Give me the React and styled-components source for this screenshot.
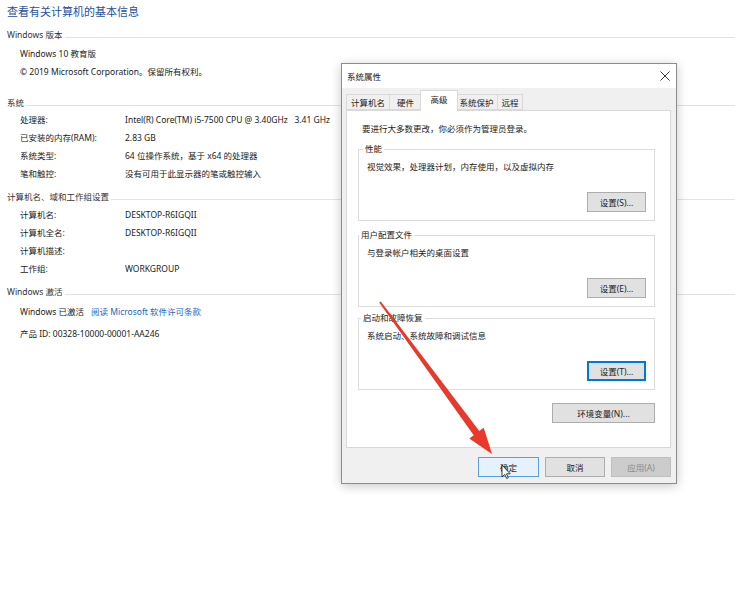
import React from 'react';
import styled, { createGlobalStyle } from 'styled-components';

const GlobalStyle = createGlobalStyle`
  html, body {
    margin: 0;
    padding: 0;
    background: #fff;
  }
  body {
    font-family: "Noto Sans", "Noto Sans CJK SC", sans-serif;
    font-size: 8.5px;
    color: #222;
  }
`;

const Page = styled.div`
  position: relative;
  width: 735px;
  height: 599px;
  overflow: hidden;
  background: #fff;
`;

const Info = styled.div`
  padding: 4px 0 0 7px;
`;

const Title = styled.h1`
  margin: 0;
  font-size: 11px;
  line-height: 16px;
  font-weight: normal;
  color: #1f4f9e;
`;

const Section = styled.section`
  margin-top: ${({ $top }) => $top}px;
`;

const SectionHead = styled.div`
  display: flex;
  align-items: center;
  height: 16px;
  line-height: 16px;
  color: #333;
  white-space: nowrap;

  &::after {
    content: '';
    flex: 1;
    height: 1px;
    margin: 5px 0 0 2px;
    background: #e3e3e3;
  }
`;

const Rows = styled.div`
  margin-top: ${({ $top }) => $top || 0}px;
`;

const Row = styled.div`
  display: flex;
  align-items: center;
  height: 18px;
  padding-left: 13px;
  margin-top: ${({ $top }) => $top || 0}px;
  white-space: nowrap;
`;

const Label = styled.span`
  width: 105px;
  flex-shrink: 0;
`;

const Link = styled.span`
  margin-left: 7px;
  color: #1a66c2;
`;

/* dialog window */

const Dialog = styled.div`
  position: absolute;
  left: 341px;
  top: 63px;
  width: 336px;
  height: 421px;
  box-sizing: border-box;
  border: 1px solid #8c8c8c;
  background: #f0f0f0;
  box-shadow: 0 2px 10px rgba(0, 0, 0, 0.22);
  display: flex;
  flex-direction: column;
`;

const TitleBar = styled.div`
  height: 24px;
  flex-shrink: 0;
  background: #fff;
  display: flex;
  align-items: center;
  justify-content: space-between;
  padding: 0 6px 0 5px;
`;

const Close = styled.svg`
  width: 10px;
  height: 10px;
`;

const DialogBody = styled.div`
  flex: 1;
  display: flex;
  flex-direction: column;
  padding: 0 5px 0 4px;
`;

const Tabs = styled.div`
  position: relative;
  z-index: 1;
  height: 22px;
  display: flex;
  align-items: flex-end;
`;

const Tab = styled.div`
  position: relative;
  box-sizing: border-box;
  flex-shrink: 0;
  width: ${({ $w }) => $w}px;
  height: ${({ $active }) => ($active ? 21 : 16)}px;
  margin: ${({ $active }) => ($active ? '0 -2px -1px -2px' : '0 0 0 -1px')};
  border: 1px solid #d9d9d9;
  border-bottom: ${({ $active }) => ($active ? 'none' : '1px solid #d9d9d9')};
  background: ${({ $active }) => ($active ? '#fff' : '#f0f0f0')};
  z-index: ${({ $active }) => ($active ? 2 : 1)};
  display: flex;
  align-items: center;
  justify-content: center;
  padding-bottom: ${({ $active }) => ($active ? 4 : 0)}px;
  white-space: nowrap;

  &:first-child {
    margin-left: 0;
  }
`;

const Panel = styled.div`
  box-sizing: border-box;
  height: 338px;
  background: #fff;
  border: 1px solid #d9d9d9;
  padding: 11px 15px 0 11px;
`;

const Intro = styled.div`
  line-height: 14px;
  padding-left: 4px;
`;

const Group = styled.fieldset`
  margin: ${({ $top }) => $top}px 0 0;
  min-width: 0;
  border: 1px solid #dcdcdc;
  padding: 0 8px 8px;

  legend {
    margin-left: ${({ $lx }) => $lx}px;
    padding: 0 2px;
    line-height: 12px;
    font-size: 8.5px;
  }
`;

const Desc = styled.div`
  margin-top: 5px;
  line-height: 14px;
`;

const ButtonRow = styled.div`
  display: flex;
  justify-content: flex-end;
  margin-top: ${({ $top }) => $top}px;
`;

const Button = styled.button`
  box-sizing: border-box;
  width: ${({ $w }) => $w}px;
  height: 20px;
  padding: 0;
  font: inherit;
  color: ${({ $disabled }) => ($disabled ? '#8a8a8a' : '#222')};
  background: ${({ $hover, $disabled }) => ($hover ? '#e5f1fb' : $disabled ? '#cccccc' : '#e1e1e1')};
  border: 1px solid
    ${({ $hover, $focus, $disabled }) =>
      $focus ? '#0078d7' : $hover ? '#5a9fdf' : $disabled ? '#bfbfbf' : '#adadad'};
  box-shadow: ${({ $focus }) => ($focus ? 'inset 0 0 0 1px #0078d7' : 'none')};
`;

const Footer = styled.div`
  display: flex;
  justify-content: flex-end;
  gap: 6px;
  padding-top: 9px;
`;

const Overlay = styled.svg`
  position: absolute;
  left: 0;
  top: 0;
  width: 735px;
  height: 599px;
  pointer-events: none;
`;

const tabs = [
  { label: '计算机名', w: 44 },
  { label: '硬件', w: 33 },
  { label: '高级', w: 38, active: true },
  { label: '系统保护', w: 43 },
  { label: '远程', w: 26 },
];

const groups = [
  { title: '性能', lx: -4, top: 7, desc: '视觉效果，处理器计划，内存使用，以及虚拟内存', btn: '设置(S)...' },
  { title: '用户配置文件', lx: -8, top: 8, desc: '与登录帐户相关的桌面设置', btn: '设置(E)...' },
  { title: '启动和故障恢复', lx: -6, top: 5, desc: '系统启动、系统故障和调试信息', btn: '设置(T)...', focus: true },
];

export default function App() {
  return (
    <Page>
      <GlobalStyle />
      <Info>
        <Title>查看有关计算机的基本信息</Title>

        <Section $top={7}>
          <SectionHead>Windows 版本</SectionHead>
          <Rows $top={1}>
            <Row>Windows 10 教育版</Row>
            <Row>© 2019 Microsoft Corporation。保留所有权利。</Row>
          </Rows>
        </Section>

        <Section $top={15}>
          <SectionHead>系统</SectionHead>
          <Rows $top={-1}>
            <Row>
              <Label>处理器:</Label>
              Intel(R) Core(TM) i5-7500 CPU @ 3.40GHz&nbsp;&nbsp;&nbsp;3.41 GHz
            </Row>
            <Row>
              <Label>已安装的内存(RAM):</Label>
              2.83 GB
            </Row>
            <Row>
              <Label>系统类型:</Label>
              64 位操作系统，基于 x64 的处理器
            </Row>
            <Row>
              <Label>笔和触控:</Label>
              没有可用于此显示器的笔或触控输入
            </Row>
          </Rows>
        </Section>

        <Section $top={7}>
          <SectionHead>计算机名、域和工作组设置</SectionHead>
          <Rows>
            <Row>
              <Label>计算机名:</Label>
              DESKTOP-R6IGQII
            </Row>
            <Row>
              <Label>计算机全名:</Label>
              DESKTOP-R6IGQII
            </Row>
            <Row>
              <Label>计算机描述:</Label>
            </Row>
            <Row>
              <Label>工作组:</Label>
              WORKGROUP
            </Row>
          </Rows>
        </Section>

        <Section $top={7}>
          <SectionHead>Windows 激活</SectionHead>
          <Rows $top={2}>
            <Row>
              Windows 已激活
              <Link>阅读 Microsoft 软件许可条款</Link>
            </Row>
            <Row $top={4}>产品 ID: 00328-10000-00001-AA246</Row>
          </Rows>
        </Section>
      </Info>

      <Dialog>
        <TitleBar>
          <span>系统属性</span>
          <Close viewBox="0 0 10 10">
            <path d="M0.5 0.5 L9.5 9.5 M9.5 0.5 L0.5 9.5" stroke="#333" strokeWidth="1" />
          </Close>
        </TitleBar>
        <DialogBody>
          <Tabs>
            {tabs.map((t) => (
              <Tab key={t.label} $w={t.w} $active={t.active}>
                {t.label}
              </Tab>
            ))}
          </Tabs>
          <Panel>
            <Intro>要进行大多数更改，你必须作为管理员登录。</Intro>
            {groups.map((g) => (
              <Group key={g.title} $top={g.top} $lx={g.lx}>
                <legend>{g.title}</legend>
                <Desc>{g.desc}</Desc>
                <ButtonRow $top={18}>
                  <Button $w={59} $focus={g.focus}>
                    {g.btn}
                  </Button>
                </ButtonRow>
              </Group>
            ))}
            <ButtonRow $top={13}>
              <Button $w={103}>环境变量(N)...</Button>
            </ButtonRow>
          </Panel>
          <Footer>
            <Button $w={61} $hover>
              确定
            </Button>
            <Button $w={60}>取消</Button>
            <Button $w={60} $disabled>
              应用(A)
            </Button>
          </Footer>
        </DialogBody>
      </Dialog>

      <Overlay viewBox="0 0 735 599">
        <polygon
          points="379.2,302.6 473.7,435.2 469.3,438.5 492,454 483.7,427.7 479.3,431 380.8,301.4"
          fill="#e8392d"
        />
        <path
          d="M502 465 L502 477 L504.8 474.4 L506.7 478.5 L508.3 477.8 L506.5 473.8 L510.2 473.8 Z"
          fill="#fff"
          stroke="#111"
          strokeWidth="0.8"
          strokeLinejoin="round"
        />
      </Overlay>
    </Page>
  );
}
